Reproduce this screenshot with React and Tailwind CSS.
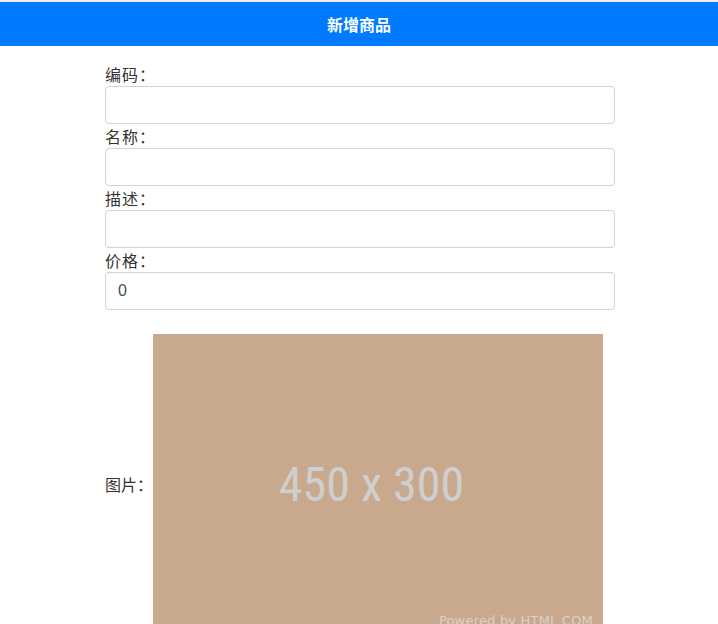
const fields = [
  { label: '编码：', value: '' },
  { label: '名称：', value: '' },
  { label: '描述：', value: '' },
  { label: '价格：', value: '0' },
]

function Placeholder() {
  return (
    <div className="relative w-[450px] h-[300px] shrink-0 bg-[#c9a98d] flex items-center justify-center">
      <span className="mr-[13px] mt-[2px] text-[48px] leading-none text-[#cfcfcf] font-['Liberation_Sans_Narrow','Roboto_Condensed',Arial,sans-serif]">
        450 x 300
      </span>
      <span className="absolute right-[10px] bottom-[7px] text-[13px] leading-none tracking-[0.2px] text-[#dcd2c8] font-['DejaVu_Sans',Verdana,sans-serif]">
        Powered by HTML.COM
      </span>
    </div>
  )
}

export default function App() {
  return (
    <div className="min-h-screen bg-white font-['Noto_Sans_CJK_SC','Noto_Sans',sans-serif] text-[#333333]">
      <div className="h-[2px] bg-[#ececec]" />
      <header className="h-[44px] bg-[#007bff] flex items-center justify-center">
        <h1 className="text-[16px] font-bold text-white">新增商品</h1>
      </header>
      <form className="w-[510px] ml-[105px] pt-[16px]">
        {fields.map((f) => (
          <div key={f.label}>
            <label className="block text-[16px] leading-[24px] tracking-[1px]">
              {f.label}
            </label>
            <input
              type="text"
              defaultValue={f.value}
              className="block w-full h-[38px] px-3 border border-[#ced4da] rounded-[4px] text-[16px] text-[#495057] font-['Liberation_Sans',Arial,sans-serif] outline-none"
            />
          </div>
        ))}
        <div className="flex items-center mt-[24px]">
          <span className="text-[16px] leading-[24px] whitespace-nowrap w-[48px] shrink-0">图片：</span>
          <Placeholder />
        </div>
      </form>
    </div>
  )
}
